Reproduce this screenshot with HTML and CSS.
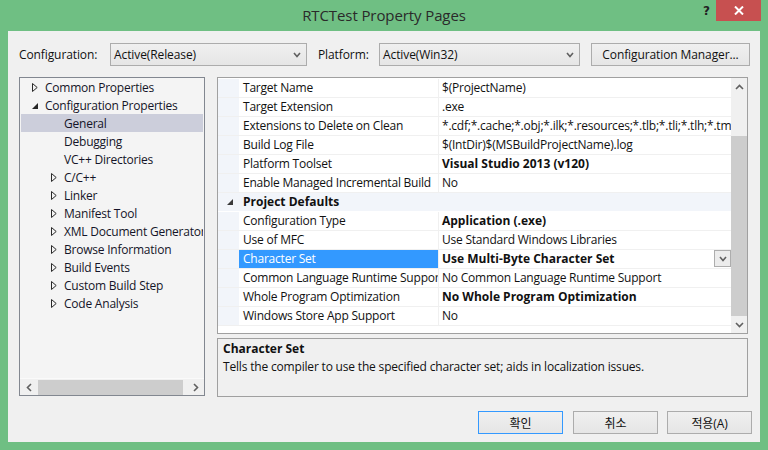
FILE: index.html
```html
<!DOCTYPE html>
<html>
<head>
<meta charset="utf-8">
<link rel="stylesheet" href="styles.css">
</head>
<body>
<div class="window">
  <div class="titlebar">
    <div class="tb-side"></div>
    <div class="title">RTCTest Property Pages</div>
    <div class="tb-side controls">
      <span class="help">?</span>
      <span class="close"><svg width="10" height="9" viewBox="0 0 10 9"><path d="M1 0.5 L9 8.5 M9 0.5 L1 8.5" stroke="#fff" stroke-width="2"/></svg></span>
    </div>
  </div>
  <div class="client">
    <div class="toprow">
      <span class="lbl lbl-config">Configuration:</span>
      <div class="combo combo-config"><span>Active(Release)</span><svg class="chev" width="8" height="6" viewBox="0 0 8 6"><path d="M1 1 L4 4.5 L7 1" stroke="#606060" stroke-width="1.6" fill="none"/></svg></div>
      <span class="lbl lbl-platform">Platform:</span>
      <div class="combo combo-platform"><span>Active(Win32)</span><svg class="chev" width="8" height="6" viewBox="0 0 8 6"><path d="M1 1 L4 4.5 L7 1" stroke="#606060" stroke-width="1.6" fill="none"/></svg></div>
      <button class="btn btn-mgr">Configuration Manager...</button>
    </div>
    <div class="main">
      <div class="tree">
        <div class="tree-items">
          <div class="trow lvl0"><svg class="tri" width="6" height="9" viewBox="0 0 6 9"><path d="M0.5 0.5 L5.2 4.5 L0.5 8.5 Z" stroke="#2a2a2a" fill="none"/></svg><span>Common Properties</span></div>
          <div class="trow lvl0"><svg class="tri" width="6" height="9" viewBox="0 0 6 9"><path d="M6 2 L6 8 L0 8 Z" fill="#262626"/></svg><span>Configuration Properties</span></div>
          <div class="trow lvl1 sel"><span class="notri"></span><span>General</span></div>
          <div class="trow lvl1"><span class="notri"></span><span>Debugging</span></div>
          <div class="trow lvl1"><span class="notri"></span><span>VC++ Directories</span></div>
          <div class="trow lvl1"><svg class="tri" width="6" height="9" viewBox="0 0 6 9"><path d="M0.5 0.5 L5.2 4.5 L0.5 8.5 Z" stroke="#2a2a2a" fill="none"/></svg><span>C/C++</span></div>
          <div class="trow lvl1"><svg class="tri" width="6" height="9" viewBox="0 0 6 9"><path d="M0.5 0.5 L5.2 4.5 L0.5 8.5 Z" stroke="#2a2a2a" fill="none"/></svg><span>Linker</span></div>
          <div class="trow lvl1"><svg class="tri" width="6" height="9" viewBox="0 0 6 9"><path d="M0.5 0.5 L5.2 4.5 L0.5 8.5 Z" stroke="#2a2a2a" fill="none"/></svg><span>Manifest Tool</span></div>
          <div class="trow lvl1"><svg class="tri" width="6" height="9" viewBox="0 0 6 9"><path d="M0.5 0.5 L5.2 4.5 L0.5 8.5 Z" stroke="#2a2a2a" fill="none"/></svg><span>XML Document Generator Tool</span></div>
          <div class="trow lvl1"><svg class="tri" width="6" height="9" viewBox="0 0 6 9"><path d="M0.5 0.5 L5.2 4.5 L0.5 8.5 Z" stroke="#2a2a2a" fill="none"/></svg><span>Browse Information</span></div>
          <div class="trow lvl1"><svg class="tri" width="6" height="9" viewBox="0 0 6 9"><path d="M0.5 0.5 L5.2 4.5 L0.5 8.5 Z" stroke="#2a2a2a" fill="none"/></svg><span>Build Events</span></div>
          <div class="trow lvl1"><svg class="tri" width="6" height="9" viewBox="0 0 6 9"><path d="M0.5 0.5 L5.2 4.5 L0.5 8.5 Z" stroke="#2a2a2a" fill="none"/></svg><span>Custom Build Step</span></div>
          <div class="trow lvl1"><svg class="tri" width="6" height="9" viewBox="0 0 6 9"><path d="M0.5 0.5 L5.2 4.5 L0.5 8.5 Z" stroke="#2a2a2a" fill="none"/></svg><span>Code Analysis</span></div>
        </div>
        <div class="hscroll">
          <svg class="harrow" width="6" height="9" viewBox="0 0 6 9"><path d="M5 1 L1.5 4.5 L5 8" stroke="#606060" stroke-width="1.6" fill="none"/></svg>
          <div class="htrack"><div class="hthumb"></div></div>
          <svg class="harrow" width="6" height="9" viewBox="0 0 6 9"><path d="M1 1 L4.5 4.5 L1 8" stroke="#606060" stroke-width="1.6" fill="none"/></svg>
        </div>
      </div>
      <div class="right">
        <div class="grid">
          <div class="grid-rows">
            <div class="prow"><div class="gut"></div><div class="pname">Target Name</div><div class="pval">$(ProjectName)</div></div>
            <div class="prow"><div class="gut"></div><div class="pname">Target Extension</div><div class="pval">.exe</div></div>
            <div class="prow"><div class="gut"></div><div class="pname">Extensions to Delete on Clean</div><div class="pval">*.cdf;*.cache;*.obj;*.ilk;*.resources;*.tlb;*.tli;*.tlh;*.tmp;*.rsp;*.pgc;*.pgd;*.meta</div></div>
            <div class="prow"><div class="gut"></div><div class="pname">Build Log File</div><div class="pval">$(IntDir)$(MSBuildProjectName).log</div></div>
            <div class="prow"><div class="gut"></div><div class="pname">Platform Toolset</div><div class="pval bold">Visual Studio 2013 (v120)</div></div>
            <div class="prow"><div class="gut"></div><div class="pname">Enable Managed Incremental Build</div><div class="pval">No</div></div>
            <div class="prow header"><div class="gut"><svg width="6" height="6" viewBox="0 0 6 6"><path d="M6 0 L6 6 L0 6 Z" fill="#3a3a3a"/></svg></div><div class="hname">Project Defaults</div></div>
            <div class="prow"><div class="gut"></div><div class="pname">Configuration Type</div><div class="pval bold">Application (.exe)</div></div>
            <div class="prow"><div class="gut"></div><div class="pname">Use of MFC</div><div class="pval">Use Standard Windows Libraries</div></div>
            <div class="prow"><div class="gut"></div><div class="pname selname">Character Set</div><div class="pval bold"><span class="vtext">Use Multi-Byte Character Set</span><span class="dd"><svg width="8" height="6" viewBox="0 0 8 6"><path d="M1 1 L4 4.5 L7 1" stroke="#606060" stroke-width="1.6" fill="none"/></svg></span></div></div>
            <div class="prow"><div class="gut"></div><div class="pname">Common Language Runtime Support</div><div class="pval">No Common Language Runtime Support</div></div>
            <div class="prow"><div class="gut"></div><div class="pname">Whole Program Optimization</div><div class="pval bold">No Whole Program Optimization</div></div>
            <div class="prow"><div class="gut"></div><div class="pname">Windows Store App Support</div><div class="pval">No</div></div>
          </div>
          <div class="vscroll">
            <div class="varrow"><svg width="9" height="6" viewBox="0 0 9 6"><path d="M1 5 L4.5 1.5 L8 5" stroke="#606060" stroke-width="1.6" fill="none"/></svg></div>
            <div class="vtrack"><div class="vthumb"></div></div>
            <div class="varrow"><svg width="9" height="6" viewBox="0 0 9 6"><path d="M1 1 L4.5 4.5 L8 1" stroke="#606060" stroke-width="1.6" fill="none"/></svg></div>
          </div>
        </div>
        <div class="desc">
          <div class="desc-title">Character Set</div>
          <div class="desc-text">Tells the compiler to use the specified character set; aids in localization issues.</div>
        </div>
      </div>
    </div>
    <div class="buttons">
      <button class="btn dlg default">확인</button>
      <button class="btn dlg">취소</button>
      <button class="btn dlg">적용(A)</button>
    </div>
  </div>
</div>
</body>
</html>
```

FILE: styles.css
```css
* { box-sizing: border-box; }
html, body { margin: 0; padding: 0; }
body {
  width: 768px;
  height: 450px;
  overflow: hidden;
  background: #6fbf83;
  font-family: "Open Sans", "Noto Sans CJK KR", sans-serif;
  font-size: 12px;
  color: #111;
}
.window { display: flex; flex-direction: column; height: 450px; }

.titlebar {
  height: 31px;
  display: grid;
  grid-template-columns: 1fr auto 1fr;
  align-items: start;
}
.title {
  font-size: 15px;
  color: #2a2a2a;
  line-height: 30px;
  letter-spacing: -0.1px;
}
.controls { display: flex; justify-content: flex-end; padding-right: 7px; }
.help {
  width: 19px;
  height: 21px;
  font-family: "DejaVu Sans", sans-serif;
  font-weight: bold;
  font-size: 12px;
  color: #222;
  text-align: center;
  line-height: 22px;
}
.close {
  width: 45px;
  height: 21px;
  background: #c75050;
  display: flex;
  align-items: center;
  justify-content: center;
}

.client {
  flex: 1;
  margin: 0 8px 8px 8px;
  background: #f0f0f0;
  display: flex;
  flex-direction: column;
}

.toprow {
  margin-top: 12px;
  padding-left: 11px;
  height: 23px;
  display: flex;
  align-items: center;
  letter-spacing: -0.1px;
}
.lbl { color: #111; }
.lbl-config { width: 91px; }
.lbl-platform { width: 61px; }
.combo {
  height: 23px;
  border: 1px solid #acacac;
  background: linear-gradient(#f0f0f0, #e5e5e5);
  display: flex;
  align-items: center;
  justify-content: space-between;
  padding: 0 5px 0 3px;
}
.combo-config { width: 197px; margin-right: 11px; }
.combo-platform { width: 201px; margin-right: 11px; }
.btn {
  font-family: "Open Sans", "Noto Sans CJK KR", sans-serif;
  font-size: 12px;
  color: #111;
  border: 1px solid #acacac;
  background: linear-gradient(#f0f0f0, #e5e5e5);
  height: 23px;
  padding: 0;
  margin: 0;
  letter-spacing: -0.1px;
}
.btn-mgr { width: 159px; }

.main {
  margin-top: 11px;
  padding-left: 11px;
  display: flex;
  gap: 12px;
  height: 320px;
}
.tree {
  width: 186px;
  height: 319px;
  border: 1px solid #828790;
  background: #f4f4f4;
  display: flex;
  flex-direction: column;
  color: #141428;
}
.tree-items { flex: 1; padding-top: 0; overflow: hidden; letter-spacing: -0.22px; }
.trow {
  height: 18px;
  display: flex;
  align-items: center;
  white-space: nowrap;
  margin: 0 1px;
  overflow: hidden;
}
.trow.sel { background: #cccedb; }
.lvl0 { padding-left: 11px; }
.lvl1 { padding-left: 30px; }
.tri, .notri { width: 6px; height: 9px; margin-right: 7px; flex: none; display: block; }
.hscroll {
  height: 17px;
  display: flex;
  align-items: center;
  border-top: 1px solid #fafafa;
  background: #f0f0f0;
  padding: 0 5px 0 6px;
}
.harrow { flex: none; }
.htrack { flex: 1; height: 15px; padding: 0 6px; }
.hthumb { width: 145px; height: 15px; background: #cdcdcd; }

.right {
  width: 531px;
  display: flex;
  flex-direction: column;
  gap: 4px;
}
.grid {
  height: 257px;
  border: 1px solid #a0a0a0;
  background: #fff;
  display: flex;
}
.grid-rows { flex: 1; padding-top: 1px; overflow: hidden; }
.prow {
  height: 19px;
  display: flex;
  border-bottom: 1px solid #f0f0f0;
  white-space: nowrap;
}
.gut {
  width: 21px;
  flex: none;
  background: #f2f5fa;
  display: flex;
  align-items: center;
  justify-content: center;
  padding-left: 3px;
}
.pname {
  width: 200px;
  flex: none;
  padding-left: 4px;
  border-right: 1px solid #f0f0f0;
  line-height: 18px;
  overflow: hidden;
  letter-spacing: -0.22px;
}
.pname.selname { background: #3399ff; color: #fff; }
.pval {
  flex: 1;
  padding-left: 3px;
  line-height: 18px;
  overflow: hidden;
  display: flex;
  letter-spacing: -0.22px;
}
.pval.bold { font-weight: bold; letter-spacing: 0; }
.vtext { flex: 1; }
.dd {
  width: 17px;
  height: 17px;
  border: 1px solid #adadad;
  background: #ececec;
  display: flex;
  align-items: center;
  justify-content: center;
  flex: none;
}
.prow.header { background: #f2f5fa; border-bottom-color: #fff; }
.hname { padding-left: 4px; font-weight: bold; line-height: 18px; }

.vscroll {
  width: 16px;
  background: #f0f0f0;
  display: flex;
  flex-direction: column;
}
.varrow { height: 17px; display: flex; align-items: center; justify-content: center; }
.vtrack { flex: 1; display: flex; flex-direction: column; justify-content: flex-end; }
.vthumb { height: 180px; background: #cdcdcd; }

.desc {
  height: 59px;
  border: 1px solid #a0a0a0;
  background: #f0f0f0;
  padding: 1px 5px;
  line-height: 18px;
}
.desc-title { font-weight: bold; }
.desc-text { letter-spacing: -0.18px; }

.buttons {
  margin-top: 14px;
  display: flex;
  justify-content: flex-end;
  padding-right: 8px;
  gap: 9px;
}
.dlg { width: 85px; }
.dlg.default { border-color: #3399ff; margin-right: 1px; }
```
